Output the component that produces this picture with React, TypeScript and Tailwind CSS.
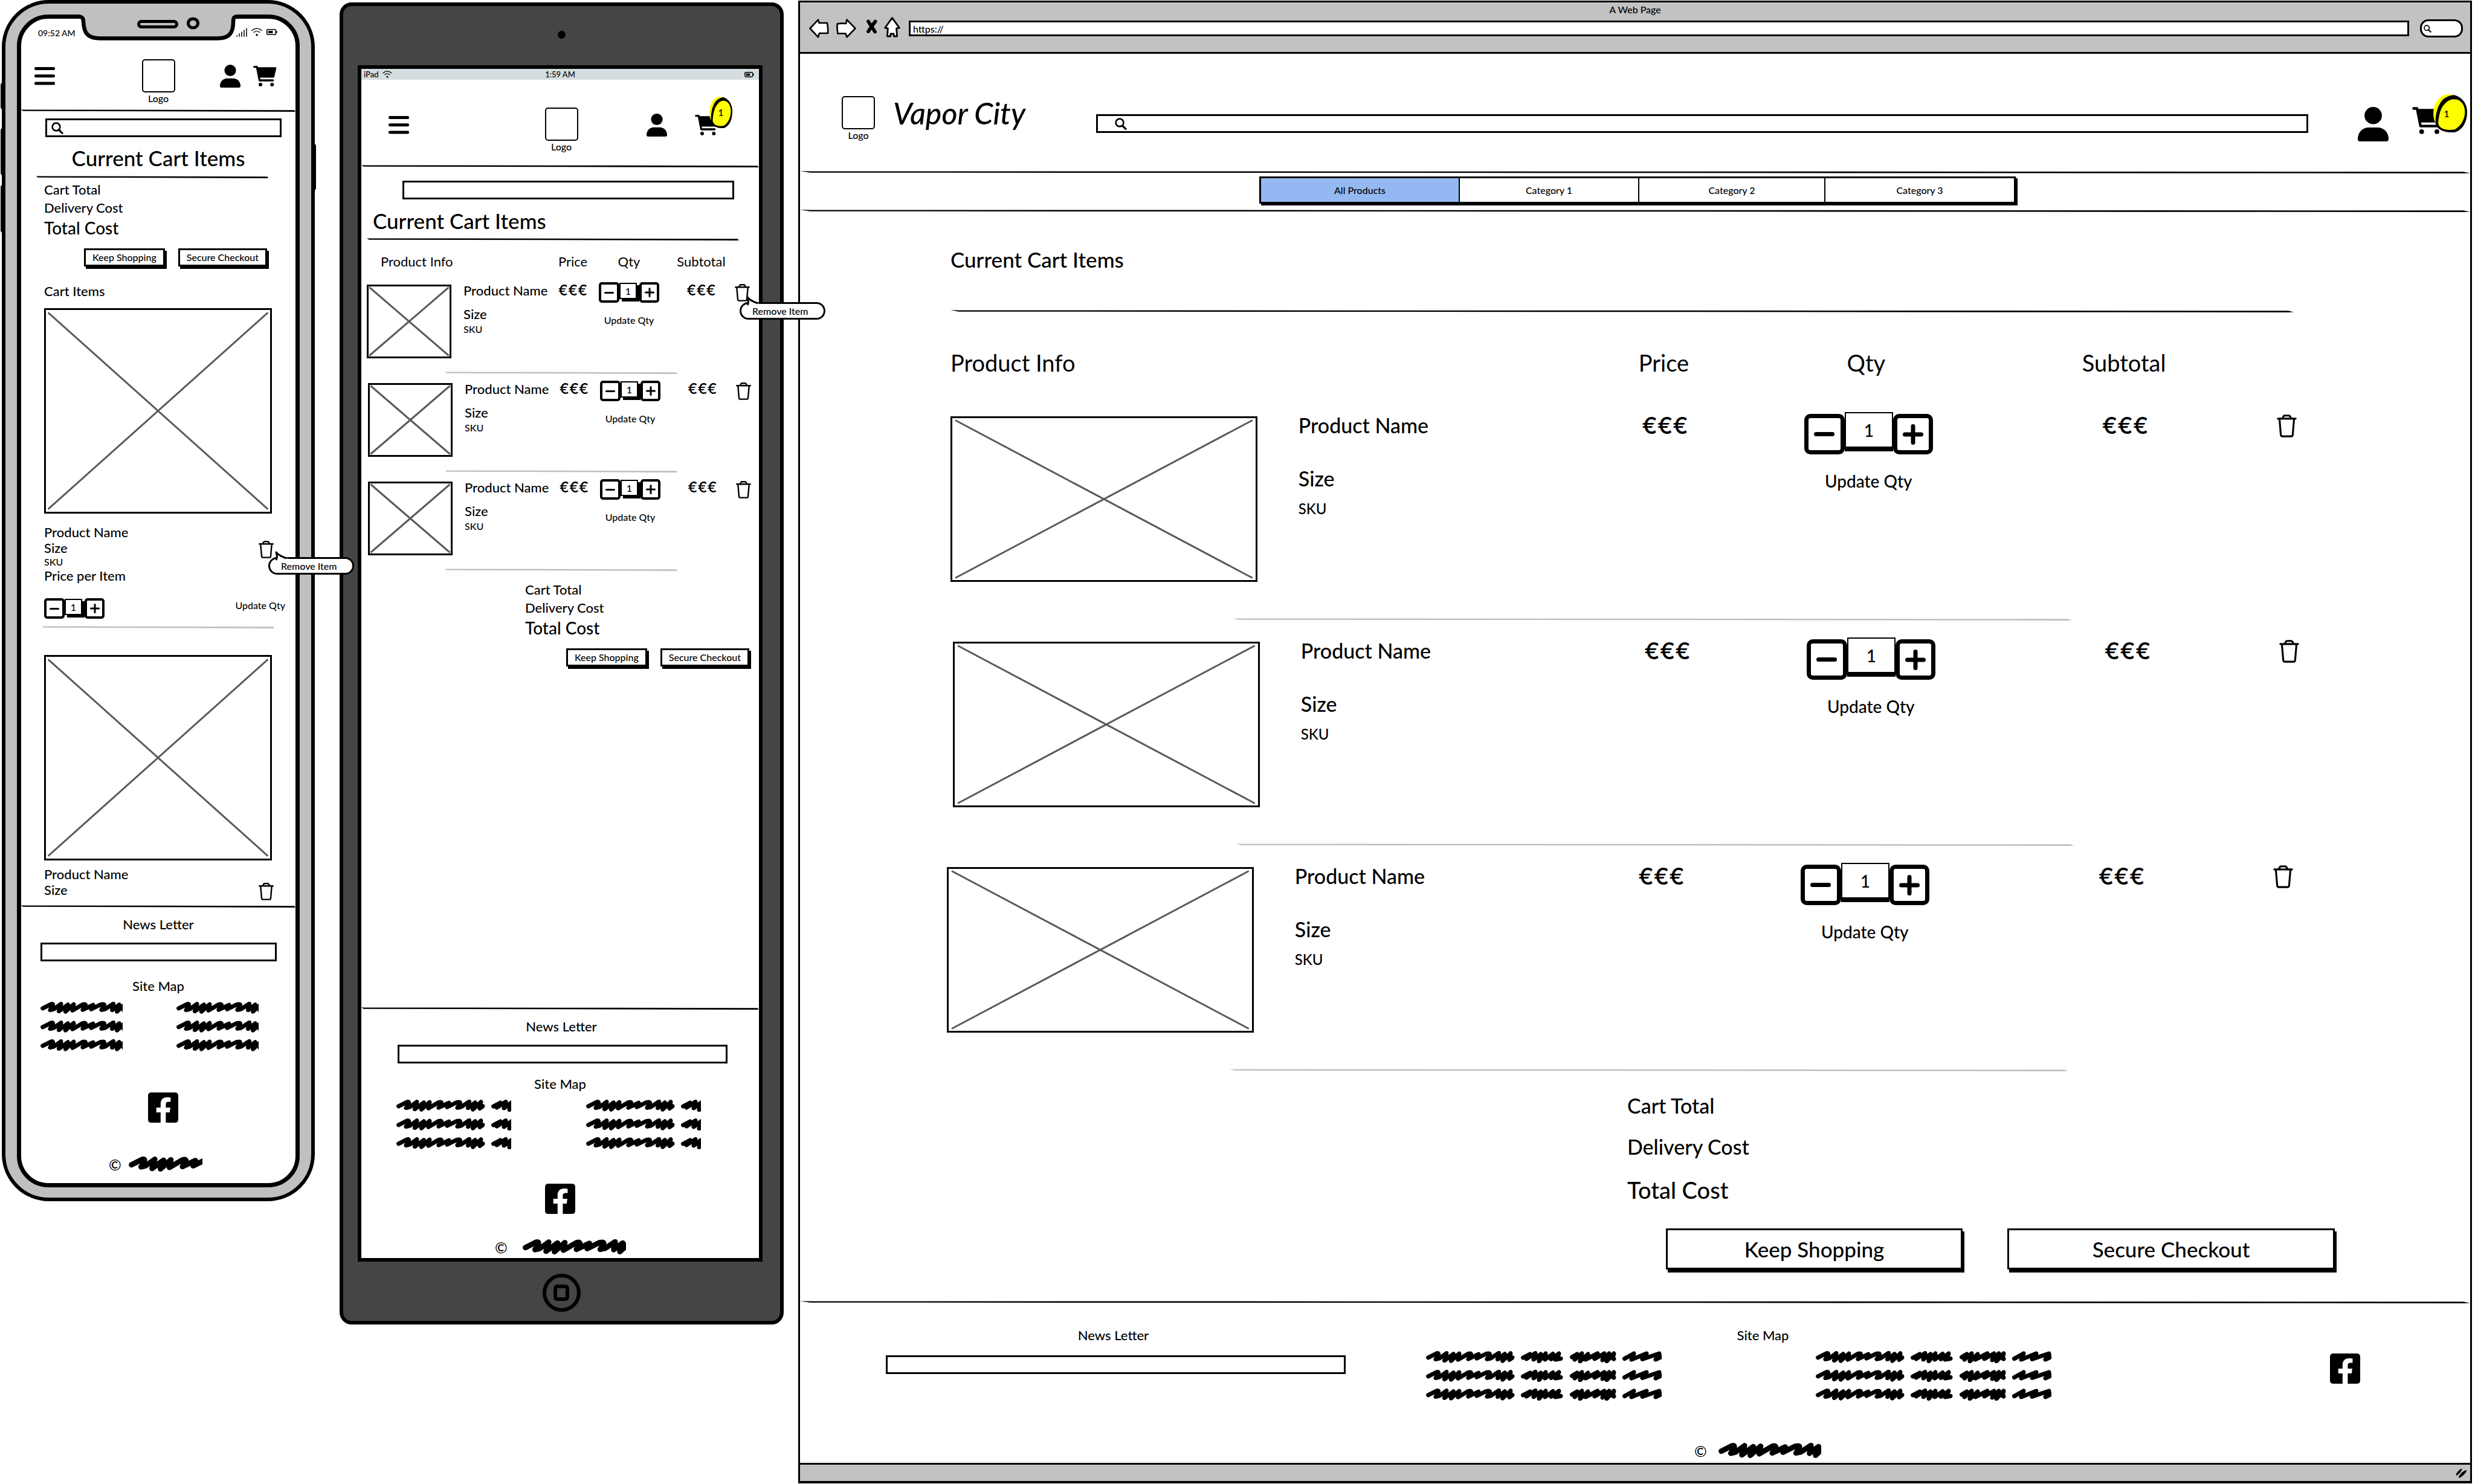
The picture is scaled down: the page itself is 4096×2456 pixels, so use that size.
import React from "react";

/* ---------- drawings ---------- */

function Rule({ className = "", gray = false }: { className?: string; gray?: boolean }) {
  return (
    <svg
      aria-hidden="true"
      className={`block h-1 ${gray ? "text-[#bfbfbf]" : "text-black"} ${className}`}
      viewBox="0 0 1000 4"
      preserveAspectRatio="none"
    >
      <path d="M0 0 L6 0.5 L500 0.7 L996 1.3 L1000 3.6 L996 4 L500 3.2 L6 2.8 Z" fill="currentColor" />
    </svg>
  );
}

function BurgerIcon() {
  return (
    <svg className="h-[30px] w-[34px]" viewBox="0 0 34 30">
      <rect x="0" y="0" width="34" height="5" rx="2.2" />
      <rect x="0" y="12.3" width="34" height="5" rx="2.2" />
      <rect x="0" y="24.5" width="34" height="5" rx="2.2" />
    </svg>
  );
}

function UserIcon({ className }: { className: string }) {
  return (
    <svg className={className} viewBox="0 0 34 38">
      <ellipse cx="17" cy="9.5" rx="9.6" ry="9.5" />
      <path d="M0 35 C0 28 5.5 22.7 12 22.7 H22 C28.5 22.7 34 28 34 35 C34 37 33.3 38 31.5 38 H2.5 C0.7 38 0 37 0 35 Z" />
    </svg>
  );
}

function CartIcon({ className }: { className: string }) {
  return (
    <svg className={className} viewBox="0 0 39 34">
      <path d="M1.8 1.7 H6.2 L10.6 24 H32.6" fill="none" stroke="#000" strokeWidth="3.3" strokeLinecap="round" strokeLinejoin="round" />
      <path d="M6.4 2.2 H37 Q38.6 2.3 38.3 4 L35 18 Q34.6 19.4 33 19.4 H9.8 Z" />
      <circle cx="12" cy="31" r="3" />
      <circle cx="31.3" cy="31" r="3" />
    </svg>
  );
}

function TrashIcon({ className }: { className: string }) {
  return (
    <svg className={className} viewBox="0 0 25 29" fill="none" stroke="#000" strokeWidth="2.4" strokeLinecap="round" strokeLinejoin="round">
      <path d="M1.3 5.2 H23.7" />
      <path d="M7.2 4.8 Q8 1.6 9.8 1.3 H15 Q17 1.6 17.8 4.8" />
      <path d="M3.3 5.8 L5 25.6 Q5.2 27.6 7 27.6 H17.8 Q19.8 27.6 20 25.6 L21.7 5.8" />
    </svg>
  );
}

function SearchIcon({ className }: { className: string }) {
  return (
    <svg className={className} viewBox="0 0 20 20" fill="none" stroke="#000" strokeLinecap="round">
      <circle cx="8" cy="8" r="6.4" strokeWidth="2.6" />
      <path d="M13 13.5 L18 18.3" strokeWidth="3.2" />
    </svg>
  );
}

function WifiIcon({ className }: { className: string }) {
  return (
    <svg className={className} viewBox="0 0 18 14" fill="none" stroke="#000" strokeWidth="1.4" strokeLinecap="round">
      <path d="M1 4.4 C5.5 0 12.5 0 17 4.4" />
      <path d="M4.2 7.6 C7 5 11 5 13.8 7.6" />
      <circle cx="9" cy="11.8" r="1.1" fill="#000" />
    </svg>
  );
}

function BatteryIcon({ className }: { className: string }) {
  return (
    <svg className={className} viewBox="0 0 18 10">
      <rect x="0.8" y="0.8" width="14.6" height="8.4" rx="2" fill="none" stroke="#000" strokeWidth="1.6" />
      <rect x="3" y="3" width="7.5" height="4" />
      <path d="M16 3 Q18 3.4 18 5 Q18 6.6 16 7 Z" />
    </svg>
  );
}

function SignalIcon() {
  return (
    <svg className="h-[15px] w-[18px]" viewBox="0 0 18 15" stroke="#000" strokeWidth="1.5" strokeLinecap="round">
      <path d="M1 13 V14.2 M5 9.8 V14.2 M9 7 V14.2 M13 4 V14.2 M17 1 V14.2" />
    </svg>
  );
}

function FacebookIcon() {
  return (
    <svg className="block h-[50px] w-[50px]" viewBox="0 0 50 50">
      <path d="M5.5 0 H44.5 Q50 0 50 5.5 V44.5 Q50 50 44.5 50 H29.4 V33.1 H35.9 L36.9 25 H29.4 V19.5 C29.4 17.3 30.5 15.4 33.8 15.4 H37.4 V8.3 C37.4 8.3 34 7.9 31 7.9 C25.5 7.9 20.8 11.5 20.8 19 V25 H13.7 V33.1 H20.8 V50 H5.5 Q0 50 0 44.5 V5.5 Q0 0 5.5 0 Z" />
    </svg>
  );
}

const SCRIBBLE =
  "M3.6 10.8 L18 3.6 Q22 3 20 7 L16 13.6 L22 12.2 L34 3.6 L30.4 15.6 L45.4 4.8 L41.4 16.2 L55 4.2 L53 14.2 L70 4.4 Q76 2.8 74 7 L70 13.2 L87 5.2 L84 12.2 L100 4.4 Q107 2.6 105 7 L101 13.2 L107 12 L120.6 3.2 L118.6 13.6 L130.4 4.8 L126.6 16.2 L140 3.8 L138 11 L143 10.8 L138 14.4" +
  " M160.5 11 L172 5 L166 13 L181 3.5 L178 14 L190 5 L187 16.6 L198 4 L197 14 L210 4.5 L207 13.4 L220 4 L217 12 L223 12.6 L214 14" +
  " M241.5 10 L250 5 L246 14 L258 4 L255 16.8 L268 5 L264 14 L284 4 L279 13 L295 4 L292 15 L303 4 L299 16.8 L311 4 L309 12 L311 13" +
  " M328.5 12.6 L344 4 L340 14 L365 4 L358 13.4 L386 4 L380 14 L402 4 L398 15";

function Scribble({ className, large = false }: { className: string; large?: boolean }) {
  return (
    <svg className={`block ${large ? "h-[26px]" : "h-5"} ${className}`}>
      <g transform={large ? "scale(1.27)" : "scale(1)"}>
        <path d={SCRIBBLE} fill="none" stroke="#000" strokeWidth="7" strokeLinecap="round" strokeLinejoin="round" />
      </g>
    </svg>
  );
}

function Badge({ className, textClass }: { className: string; textClass: string }) {
  return (
    <span className={`absolute flex items-center justify-center ${className}`}>
      <svg className="absolute inset-0 h-full w-full" viewBox="0 0 38 52" preserveAspectRatio="none">
        <ellipse cx="17" cy="26" rx="17" ry="26" fill="#ff0" />
        <path d="M23 1 C32 3 38 13 38 24 C38 38 33 49 24 52 C14 53 4 49 2.5 40 C2 28 5 14 11 7 C15 3 19 1.5 23 1 Z" />
        <path d="M21 7 C30 5 35.5 14 35.5 24 C35.5 34 31 44 24 48 C14 50 7 47 5.5 40 C6 30 8 18 13 13 C15 10 18 7.6 21 7 Z" fill="#ff0" />
      </svg>
      <span className={`relative ${textClass}`}>1</span>
    </span>
  );
}

/* ---------- shared parts ---------- */

function LogoMark({ className = "" }: { className?: string }) {
  return (
    <div className={`flex flex-col items-center ${className}`}>
      <div className="h-[55px] w-[55px] rounded-[5px] border-2 border-black" />
      <span className="text-base leading-5">Logo</span>
    </div>
  );
}

function Placeholder({ className, label }: { className: string; label: string }) {
  return (
    <div role="img" aria-label={label} className={`border-[3px] border-black ${className}`}>
      <svg className="block h-full w-full" stroke="#5a5a5a" strokeWidth="3">
        <line x1="1%" y1="1.3%" x2="99%" y2="98.7%" />
        <line x1="99%" y1="1.3%" x2="1%" y2="98.7%" />
      </svg>
    </div>
  );
}

function SmallStepper() {
  return (
    <div className="flex h-[34px] w-[100px] items-start">
      <button aria-label="Decrease quantity" className="flex h-[34px] w-[34px] items-center justify-center rounded-[5px] border-4 border-black">
        <span className="h-[3px] w-4 rounded-full bg-black" />
      </button>
      <input
        aria-label="Quantity"
        defaultValue="1"
        className="mt-px mr-1 h-[27px] w-[29px] border-2 border-black bg-white text-center text-base leading-5 shadow-[4px_4px_0_0_#000]"
      />
      <button aria-label="Increase quantity" className="flex h-[34px] w-[33px] items-center justify-center rounded-[5px] border-4 border-black bg-white">
        <svg className="h-4 w-4" viewBox="0 0 16 16" stroke="#000" strokeWidth="3" strokeLinecap="round">
          <path d="M1.5 8 H14.5 M8 1.5 V14.5" />
        </svg>
      </button>
    </div>
  );
}

function LargeStepper() {
  return (
    <div className="flex h-[67px] w-[213px] items-start">
      <button aria-label="Decrease quantity" className="flex h-[67px] w-[67px] items-center justify-center rounded-[10px] border-[7px] border-black">
        <span className="h-[7px] w-[34px] rounded-full bg-black" />
      </button>
      <input
        aria-label="Quantity"
        defaultValue="1"
        className="-mt-[3px] h-[59px] w-20 border-2 border-black bg-white text-center text-[28px] leading-9 shadow-[0_6px_0_0_#000]"
      />
      <button aria-label="Increase quantity" className="flex h-[67px] w-[66px] items-center justify-center rounded-[10px] border-[7px] border-black bg-white">
        <svg className="h-[34px] w-[34px]" viewBox="0 0 34 34" stroke="#000" strokeWidth="7" strokeLinecap="round">
          <path d="M3.5 17 H30.5 M17 3.5 V30.5" />
        </svg>
      </button>
    </div>
  );
}

function RemoveTip({ className }: { className: string }) {
  return (
    <span
      role="tooltip"
      className={`absolute z-20 flex h-[29px] w-[142px] items-center rounded-full border-[3px] border-black bg-white pl-[18px] text-base leading-5 whitespace-nowrap ${className}`}
    >
      <svg className="absolute -top-[13px] left-2 h-[17px] w-7" viewBox="0 0 28 17">
        <path d="M1.5 1.5 C5 6 11 9.5 19 11.5 L26 17 H0 C4 14 3 8 1.5 1.5 Z" fill="#fff" />
        <path d="M2 15 C4.5 11 3.6 7 2 2 C6 7 12 9.5 19 12" fill="none" stroke="#000" strokeWidth="3" strokeLinejoin="round" />
      </svg>
      Remove Item
    </span>
  );
}

function SmallActions({ className }: { className: string }) {
  return (
    <div className={`flex justify-end gap-[22px] ${className}`}>
      {["Keep Shopping", "Secure Checkout"].map((label) => (
        <button key={label} className="border-[3px] border-black bg-white px-[11px] text-base leading-6 shadow-[3px_4px_0_0_#000]">
          {label}
        </button>
      ))}
    </div>
  );
}

function SmallTotals({ className }: { className: string }) {
  return (
    <div className={className}>
      <p className="text-[22px] leading-[30px]">Cart Total</p>
      <p className="text-[22px] leading-[30px]">Delivery Cost</p>
      <p className="text-[28px] leading-9">Total Cost</p>
    </div>
  );
}

function SiteLinks({ className, widthClass }: { className: string; widthClass: string }) {
  return (
    <nav aria-label="Site map" className={`flex ${className}`}>
      {[0, 1].map((col) => (
        <ul key={col} className="flex flex-col gap-[11px]">
          {[0, 1, 2].map((row) => (
            <li key={row}>
              <a href="#" aria-label={`Site link ${col * 3 + row + 1}`} className="block">
                <Scribble className={widthClass} />
              </a>
            </li>
          ))}
        </ul>
      ))}
    </nav>
  );
}

/* ---------- phone ---------- */

function PhoneItemHead({ full, tip }: { full: boolean; tip: boolean }) {
  return (
    <div className="flex items-start justify-between pr-9 pl-[38px]">
      <div className="text-[22px] leading-[26px]">
        <p>Product Name</p>
        <p>Size</p>
        {full && <p className="text-base leading-5">SKU</p>}
        {full && <p>Price per Item</p>}
      </div>
      <div className="relative mt-[27px]">
        <button aria-label="Remove item" className="block">
          <TrashIcon className="h-[29px] w-[25px]" />
        </button>
        {tip && <RemoveTip className="top-[27px] left-4" />}
      </div>
    </div>
  );
}

function Phone() {
  return (
    <section aria-label="Phone" className="relative w-[518px] shrink-0 rounded-[78px] border-[6px] border-black bg-[#c0c0c0] px-[19px] pt-[18px] pb-[17px]">
      <div className="absolute top-[131px] -left-2 h-11 w-2 rounded-l-[4px] bg-black" />
      <div className="absolute top-[206px] -left-2 h-[78px] w-2 rounded-l-[4px] bg-black" />
      <div className="absolute top-[300px] -left-2 h-[79px] w-2 rounded-l-[4px] bg-black" />
      <div className="absolute top-[232px] -right-2 h-[77px] w-2 rounded-r-[4px] bg-black" />
      <svg className="absolute top-[18px] left-[115px] h-[46px] w-[276px]" viewBox="0 0 276 46">
        <path d="M8 0 H268 L262 12 C262 30 256 39.5 236 39.5 H42 C20 39.5 15 30 14 12 Z" fill="#c0c0c0" />
        <path d="M0 3.5 H6 C12 3.5 14 6 14 12 C15 30 20 39.5 42 39.5 H236 C256 39.5 262 30 262 12 C262 6 263 3.5 268 3.5 H276" fill="none" stroke="#000" strokeWidth="6.5" />
        <rect x="105.5" y="11.5" width="63" height="9" rx="4.5" fill="none" stroke="#000" strokeWidth="5" />
        <ellipse cx="195.5" cy="14.5" rx="8" ry="7.6" fill="none" stroke="#000" strokeWidth="5" />
      </svg>

      <div className="rounded-[52px] border-[7px] border-black bg-white">
        <div className="flex h-12 items-center justify-between pr-[30px] pl-7">
          <span className="text-sm leading-5">09:52 AM</span>
          <span className="flex items-center gap-[7px] pb-1">
            <SignalIcon />
            <WifiIcon className="h-[14px] w-[18px]" />
            <BatteryIcon className="h-[10px] w-[18px]" />
          </span>
        </div>

        <header className="grid grid-cols-[1fr_auto_1fr] items-start pt-[19px] pb-2">
          <div className="flex h-[55px] items-center pl-[22px]">
            <button aria-label="Menu"><BurgerIcon /></button>
          </div>
          <LogoMark />
          <div className="flex h-[55px] items-center justify-end gap-[21px] pr-[31px]">
            <button aria-label="Account"><UserIcon className="h-[38px] w-[34px]" /></button>
            <button aria-label="Cart"><CartIcon className="h-[34px] w-[39px]" /></button>
          </div>
        </header>
        <Rule className="w-full" />

        <label className="mt-[11px] mr-[23px] ml-10 flex h-[31px] items-center border-[3px] border-black pl-[7px]">
          <SearchIcon className="h-5 w-5" />
          <input aria-label="Search" className="min-w-0 flex-1 px-2 text-base leading-5 outline-none" />
        </label>

        <h1 className="mt-3 text-center text-[35px] leading-[44px]">Current Cart Items</h1>
        <Rule className="mt-2 ml-[25px] w-[384px]" />

        <SmallTotals className="mt-1 pl-[38px]" />
        <SmallActions className="mt-4 pr-[47px]" />

        <h2 className="mt-[26px] pl-[38px] text-[22px] leading-[30px]">Cart Items</h2>

        <Placeholder label="Product image" className="mt-[13px] mr-[39px] ml-[38px] h-[340px]" />
        <div className="mt-[18px]">
          <PhoneItemHead full tip />
        </div>
        <div className="mt-6 flex items-start justify-between pr-[17px] pl-[38px]">
          <SmallStepper />
          <button className="text-base leading-6">Update Qty</button>
        </div>
        <Rule gray className="mt-3 ml-[35px] w-[384px]" />

        <Placeholder label="Product image" className="mt-11 mr-[39px] ml-[38px] h-[340px]" />
        <div className="mt-2.5 h-16">
          <PhoneItemHead full={false} tip={false} />
        </div>

        <footer>
          <Rule className="w-full" />
          <label htmlFor="phone-news" className="mt-[13px] block text-center text-[22px] leading-[30px]">News Letter</label>
          <input id="phone-news" className="mt-[15px] mr-[31px] ml-8 block h-[31px] w-[391px] border-[3px] border-black px-2 text-base" />
          <p className="mt-[26px] text-center text-[22px] leading-[30px]">Site Map</p>
          <SiteLinks className="mt-[11px] ml-8 gap-[89px]" widthClass="w-[136px]" />
          <a href="#" aria-label="Facebook" className="mt-[68px] ml-[210px] block w-[50px]"><FacebookIcon /></a>
          <div className="mt-[56px] flex items-center pb-[18px] pl-[145px]">
            <span className="w-[33px] text-[25px] leading-[26px]">©</span>
            <Scribble large className="w-[122px]" />
          </div>
        </footer>
      </div>
    </section>
  );
}

/* ---------- tablet ---------- */

const TABLET_ROWS = ["", "ml-0.5 -mr-0.5", "ml-0.5 -mr-0.5"];

function Tablet() {
  return (
    <section aria-label="Tablet" className="mt-1 ml-[41px] flex w-[735px] shrink-0 flex-col rounded-[20px] border-[6px] border-black bg-[#454545] pr-[29px] pl-6">
      <div className="flex h-[98px] items-center justify-center pb-1 pl-1">
        <span className="h-[13px] w-[13px] rounded-full bg-black" />
      </div>

      <div className="flex min-h-[1980px] flex-col border-[6px] border-black bg-white">
        <div className="grid h-[18px] grid-cols-3 items-center bg-[#d6dde0] px-1 text-[13px] leading-[18px]">
          <span className="flex items-center gap-1.5">
            iPad <WifiIcon className="h-[12px] w-[16px]" />
          </span>
          <span className="text-center">1:59 AM</span>
          <BatteryIcon className="mr-1 h-[9px] w-[16px] justify-self-end" />
        </div>

        <header className="mt-[46px] grid grid-cols-[1fr_auto_1fr] items-start pb-5 pl-1">
          <div className="flex h-[58px] items-center pl-[41px]">
            <button aria-label="Menu"><BurgerIcon /></button>
          </div>
          <LogoMark />
          <div className="flex h-[58px] items-center justify-end gap-[46px] pr-[67px]">
            <button aria-label="Account"><UserIcon className="h-[38px] w-[34px]" /></button>
            <button aria-label="Cart, 1 item" className="relative">
              <CartIcon className="h-[34px] w-[39px]" />
              <Badge className="-top-[30px] left-6 h-[52px] w-[38px]" textClass="text-base leading-5" />
            </button>
          </div>
        </header>
        <Rule className="w-full" />

        <input aria-label="Search" className="mt-[22px] mr-[41px] ml-[68px] h-[31px] border-[3px] border-black px-2 text-base" />
        <h1 className="mt-[13px] pl-[19px] text-[35px] leading-[44px]">Current Cart Items</h1>
        <Rule className="mt-[7px] ml-[9px] w-[616px]" />

        <table className="mt-5 ml-[9px] block text-[22px] leading-[30px]">
          <thead className="block">
            <tr className="grid grid-cols-[140px_160px_82px_104px_123px_26px]">
              <th className="col-span-2 pl-[23px] text-left font-normal">Product Info</th>
              <th className="font-normal">Price</th>
              <th className="font-normal">Qty</th>
              <th className="pl-3 font-normal">Subtotal</th>
            </tr>
          </thead>
          <tbody className="block pt-[18px]">
            {TABLET_ROWS.map((shift, i) => (
              <React.Fragment key={i}>
                <tr className={`grid h-[149px] grid-cols-[140px_160px_82px_104px_123px_26px] items-start ${shift}`}>
                  <td className="pt-[5px]">
                    <Placeholder label="Product image" className="h-[122px]" />
                  </td>
                  <td className="pl-5">
                    <p>Product Name</p>
                    <p className="mt-[9px]">Size</p>
                    <p className="text-base leading-5">SKU</p>
                  </td>
                  <td className="text-center font-['Inter','Open_Sans',sans-serif] text-2xl leading-[30px]">€€€</td>
                  <td className="flex flex-col items-center pt-px">
                    <SmallStepper />
                    <button className="mt-[19px] text-base leading-5">Update Qty</button>
                  </td>
                  <td className="pl-3 text-center font-['Inter','Open_Sans',sans-serif] text-2xl leading-[30px]">€€€</td>
                  <td className="relative pt-1">
                    <button aria-label="Remove item" className="block">
                      <TrashIcon className="h-[29px] w-[25px]" />
                    </button>
                    {i === 0 && <RemoveTip className="top-[34px] left-2" />}
                  </td>
                </tr>
                <tr className="block">
                  <td colSpan={6} className="block pb-2.5 pl-[130px]">
                    <Rule gray className="w-[384px]" />
                  </td>
                </tr>
              </React.Fragment>
            ))}
          </tbody>
        </table>

        <SmallTotals className="mt-1.5 pl-[271px]" />
        <SmallActions className="mt-4 pr-4" />

        <footer className="mt-auto">
          <Rule className="w-full" />
          <label htmlFor="tablet-news" className="mt-[13px] block pl-1 text-center text-[22px] leading-[30px]">News Letter</label>
          <input id="tablet-news" className="mt-[15px] ml-[60px] block h-[31px] w-[546px] border-[3px] border-black px-2 text-base" />
          <p className="mt-[19px] text-center text-[22px] leading-[30px]">Site Map</p>
          <SiteLinks className="mt-[11px] ml-[58px] gap-[124px]" widthClass="w-[190px]" />
          <a href="#" aria-label="Facebook" className="mx-auto mt-[57px] block w-[50px]"><FacebookIcon /></a>
          <div className="mt-[42px] flex items-center pb-[5px] pl-[221px]">
            <span className="w-[46px] text-[25px] leading-[26px]">©</span>
            <Scribble large className="w-[171px]" />
          </div>
        </footer>
      </div>

      <div className="flex h-[98px] items-center justify-center pt-1 pl-1">
        <button aria-label="Home" className="flex h-[63px] w-[63px] items-center justify-center rounded-full border-[6px] border-black">
          <span className="h-[27px] w-[26px] rounded-[6px] border-[6px] border-black" />
        </button>
      </div>
    </section>
  );
}

/* ---------- browser ---------- */

const CATEGORIES = [
  { label: "All Products", width: "w-[329px]", active: true },
  { label: "Category 1", width: "w-[297px]", active: false },
  { label: "Category 2", width: "w-[308px]", active: false },
  { label: "Category 3", width: "w-[312px]", active: false },
];

const ROWS = ["", "ml-1 -mr-1", "-ml-1.5 mr-1.5"];

function Browser() {
  return (
    <section aria-label="Browser" className="mt-px ml-6 min-w-0 flex-1 border-x-[3px] border-t-[3px] border-b-4 border-black bg-white">
      <div className="border-b-[3px] border-black bg-[#c2c2c2] pb-5">
        <p className="text-center text-base leading-6">A Web Page</p>
        <div className="flex h-[38px] items-center pr-3 pl-[15px]">
          <button aria-label="Back">
            <svg className="h-[32px] w-[33px]" viewBox="0 0 33 32">
              <path d="M1.5 16 L15 1.6 L16.5 7 L30 7 Q31.5 15 31.2 24 L17 24 L15 30.4 Z" fill="#fff" stroke="#000" strokeWidth="2.6" strokeLinejoin="round" />
            </svg>
          </button>
          <button aria-label="Forward" className="ml-3">
            <svg className="h-[32px] w-[33px]" viewBox="0 0 33 32">
              <path d="M1.6 8.5 Q8 7 16 8 L17.5 1.6 L31.5 16 L17.5 30.4 L15.5 24.5 L2.4 24.5 Q1.2 16 1.6 8.5 Z" fill="#fff" stroke="#000" strokeWidth="2.6" strokeLinejoin="round" />
            </svg>
          </button>
          <button aria-label="Stop" className="ml-4 pb-1.5">
            <svg className="h-6 w-[19px]" viewBox="0 0 19 24" fill="none" stroke="#000" strokeWidth="5.8" strokeLinecap="round">
              <path d="M4 3.5 L15 20.5 M15.6 3.5 Q9 12 4 20" />
            </svg>
          </button>
          <button aria-label="Home" className="ml-[11px] pb-1">
            <svg className="h-[34px] w-[27px]" viewBox="0 0 27 34">
              <path d="M13.5 1.6 L25.4 18 L20.6 18.8 L21.6 32 L16.4 32 L16 28 L11 28 L10.6 32 L5.4 32 L6.4 18.8 L1.6 18 Z" fill="#fff" stroke="#000" strokeWidth="2.8" strokeLinejoin="round" />
            </svg>
          </button>
          <input aria-label="Address" defaultValue="https://" className="ml-3.5 h-[26px] min-w-0 flex-1 border-[3px] border-black bg-white pl-1 text-base leading-5" />
          <label className="ml-[18px] flex h-[30px] w-[71px] items-center rounded-[14px] border-[3px] border-black bg-white pl-[3px]">
            <SearchIcon className="h-[15px] w-[13px] shrink-0" />
            <input aria-label="Web search" className="min-w-0 flex-1 text-base outline-none" />
          </label>
        </div>
      </div>

      <header className="flex items-start pt-[70px] pr-[45px] pb-[49px] pl-[69px]">
        <LogoMark />
        <a href="#" className="ml-[30px] w-[221px] text-[50px] leading-[56px] whitespace-nowrap italic">Vapor City</a>
        <label className="mt-[30px] ml-[115px] flex h-[31px] min-w-0 flex-1 items-center border-[3px] border-black pl-7">
          <SearchIcon className="h-5 w-5" />
          <input aria-label="Search" className="min-w-0 flex-1 px-2 text-base leading-5 outline-none" />
        </label>
        <button aria-label="Account" className="mt-[18px] ml-[82px]">
          <UserIcon className="h-[57px] w-[51px]" />
        </button>
        <button aria-label="Cart, 1 item" className="relative mt-[15px] ml-[39px]">
          <CartIcon className="h-[51px] w-[51px]" />
          <Badge className="-top-[18px] left-[35px] h-[63px] w-[56px]" textClass="text-base leading-5 pr-3" />
        </button>
      </header>
      <Rule className="w-full" />

      <nav aria-label="Categories" className="mt-[5px] mb-2.5 flex justify-center pl-2">
        <div className="flex h-[45px] divide-x-2 divide-black border-[3px] border-black shadow-[3px_3px_0_0_#000]">
          {CATEGORIES.map((c) => (
            <button key={c.label} className={`text-base leading-6 ${c.width} ${c.active ? "bg-[#94b9f2]" : "bg-white"}`}>
              {c.label}
            </button>
          ))}
        </div>
      </nav>
      <Rule className="w-full" />

      <main>
        <h1 className="mt-[56px] pl-[249px] text-[35px] leading-[44px]">Current Cart Items</h1>
        <div className="mt-[62px] pr-[292px] pl-[249px]">
          <Rule className="w-full" />
        </div>

        <table className="mt-[59px] mr-[228px] ml-[249px] block text-[34px] leading-[44px]">
          <thead className="block">
            <tr className="grid grid-cols-[508fr_572fr_202fr_472fr_378fr_156fr] text-[38px] leading-[48px]">
              <th className="col-span-2 text-left font-normal">Product Info</th>
              <th className="font-normal">Price</th>
              <th className="pr-1 font-normal">Qty</th>
              <th className="font-normal">Subtotal</th>
            </tr>
          </thead>
          <tbody className="block pt-[58px]">
            {ROWS.map((shift, i) => (
              <React.Fragment key={i}>
                <tr className={`grid h-[341px] grid-cols-[508fr_572fr_206fr_468fr_382fr_152fr] items-start ${shift}`}>
                  <td className="pt-[7px]">
                    <Placeholder label="Product image" className="h-[274px]" />
                  </td>
                  <td className="pl-[68px]">
                    <p>Product Name</p>
                    <p className="mt-11">Size</p>
                    <p className="mt-3 text-2xl leading-8">SKU</p>
                  </td>
                  <td className="text-center font-['Inter','Open_Sans',sans-serif] text-[38px] leading-[44px]">€€€</td>
                  <td className="flex flex-col items-center pt-[3px]">
                    <LargeStepper />
                    <button className="mt-[26px] text-[28px] leading-9">Update Qty</button>
                  </td>
                  <td className="text-center font-['Inter','Open_Sans',sans-serif] text-[38px] leading-[44px]">€€€</td>
                  <td className="flex justify-center pt-1">
                    <button aria-label="Remove item">
                      <TrashIcon className="h-[38px] w-[33px]" />
                    </button>
                  </td>
                </tr>
                <tr className={`block ${shift}`}>
                  <td colSpan={6} className="block pb-7 pl-[468px]">
                    <Rule gray className="w-[1387px]" />
                  </td>
                </tr>
              </React.Fragment>
            ))}
          </tbody>
        </table>

        <div className="-mt-[5px] flex flex-col items-end pr-[224px]">
          <div className="w-[1171px] text-[34px] leading-[68px]">
            <p>Cart Total</p>
            <p>Delivery Cost</p>
            <p className="text-[38px] leading-[74px]">Total Cost</p>
          </div>
          <div className="mt-[27px] flex gap-[74px]">
            <button className="h-[68px] w-[491px] border-[3px] border-black bg-white text-[35px] leading-[44px] shadow-[3px_5px_0_0_#000]">Keep Shopping</button>
            <button className="h-[68px] w-[542px] border-[3px] border-black bg-white text-[35px] leading-[44px] shadow-[3px_5px_0_0_#000]">Secure Checkout</button>
          </div>
        </div>
      </main>

      <footer className="mt-[52px]">
        <Rule className="w-full" />
        <div className="mt-[38px] flex justify-between pr-[182px] pl-[142px]">
          <div className="w-[761px]">
            <label htmlFor="web-news" className="block pr-2 text-center text-[22px] leading-[30px]">News Letter</label>
            <input id="web-news" className="mt-[18px] block h-[31px] w-full border-[3px] border-black px-2 text-base" />
          </div>
          <div className="mr-[328px] w-[1035px]">
            <p className="pl-20 text-center text-[22px] leading-[30px]">Site Map</p>
            <SiteLinks className="mt-[11px] justify-between" widthClass="w-[390px]" />
          </div>
          <a href="#" aria-label="Facebook" className="mt-[45px] block h-[50px] w-[50px]"><FacebookIcon /></a>
        </div>
        <div className="mt-[70px] flex items-center pb-[7px] pl-[1480px]">
          <span className="w-10 text-[25px] leading-[26px]">©</span>
          <Scribble large className="w-[170px]" />
        </div>
      </footer>
      <div className="flex h-[30px] items-center justify-end border-t-[3px] border-black bg-[#c2c2c2] pr-1">
        <svg className="h-4 w-5" viewBox="0 0 20 16">
          <path d="M0.5 11.5 C1 7 6 2 10 0.5 C12 1 8 8 1.5 12 Z" />
          <path d="M5 15.5 C5 11 12 4 17 3.2 C21 3 13 13 6 16 Z" />
        </svg>
      </div>
    </section>
  );
}

export default function App() {
  return (
    <div className="flex min-h-screen w-full items-start bg-white pr-[5px] pl-[3px] font-['Lato','Open_Sans',sans-serif] font-medium text-black">
      <Phone />
      <Tablet />
      <Browser />
    </div>
  );
}
